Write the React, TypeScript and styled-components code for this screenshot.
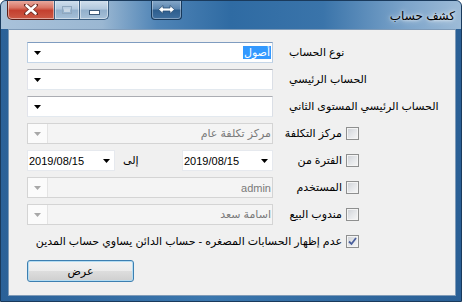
import React from 'react';
import styled, { createGlobalStyle } from 'styled-components';

const GlobalStyle = createGlobalStyle`
  html, body { margin: 0; padding: 0; background: #fff; }
  body {
    width: 462px;
    height: 302px;
    overflow: hidden;
    font-family: Tahoma, "Liberation Sans", "DejaVu Sans", sans-serif;
    font-size: 11px;
  }
`;

const Window = styled.div`
  width: 462px;
  height: 302px;
  box-sizing: border-box;
  display: flex;
  flex-direction: column;
  background: linear-gradient(to right, #2b6198, #3b77ae 45%, #2f679d 80%, #2a5f95);
  border: 1px solid #1a3a5c;
  border-radius: 6px 6px 0 0;
  overflow: hidden;
`;

const TitleBar = styled.div`
  height: 28px;
  flex: none;
  display: flex;
  align-items: flex-start;
  padding-left: 6px;
  background: linear-gradient(to right, #a9c2da 0%, #9ab7d2 22%, #4f84b6 34%, #2f6ba3 50%, #3a74aa 70%, #7ca4ca 88%, #9dbbd7 100%);
`;

const CaptionGroup = styled.div`
  display: flex;
  margin-top: -1px;
`;

const CaptionButton = styled.div<{ $kind: 'close' | 'max' | 'min' }>`
  height: 20px;
  box-sizing: border-box;
  display: flex;
  align-items: center;
  justify-content: center;
  border: 1px solid ${p => (p.$kind === 'close' ? '#5b1f18' : '#3d5f82')};
  border-top: none;
  width: ${p => (p.$kind === 'close' ? 48 : p.$kind === 'max' ? 26 : 30)}px;
  margin-left: ${p => (p.$kind === 'close' ? 0 : -1)}px;
  border-radius: ${p => (p.$kind === 'close' ? '0 0 0 5px' : p.$kind === 'min' ? '0 0 5px 0' : '0')};
  background: ${p =>
    p.$kind === 'close'
      ? 'linear-gradient(#eab0a6 0%, #d97565 40%, #c4402f 55%, #cc5a46 100%)'
      : 'linear-gradient(#d3e1ee 0%, #b3c9de 45%, #93b0cc 55%, #a6c0d8 100%)'};
  box-shadow: inset 0 0 0 1px rgba(255, 255, 255, 0.45);
`;

const SwapButton = styled.div`
  width: 31px;
  height: 20px;
  box-sizing: border-box;
  margin-left: 42px;
  margin-top: -1px;
  display: flex;
  align-items: center;
  justify-content: center;
  border: 1px solid #17385a;
  border-top: none;
  border-radius: 0 0 4px 4px;
  background: linear-gradient(#88aacb 0%, #5d87b1 45%, #2e5e8e 55%, #3f6f9f 100%);
  box-shadow: inset 0 0 0 1px rgba(255, 255, 255, 0.35);
`;

const Title = styled.div`
  flex: 1;
  text-align: right;
  padding: 8px 6px 0 0;
  font-size: 12px;
  color: #000;
  direction: rtl;
  text-shadow: 0 0 6px rgba(255, 255, 255, 0.9), 0 0 3px rgba(255, 255, 255, 0.9);
`;

const Client = styled.div`
  flex: 1;
  margin: 0 5px 5px 7px;
  background: #f0f0f0;
  border: 1px solid #7f9bb8;
  display: flex;
  flex-direction: column;
  gap: 6px;
  padding: 12px 0 0 18px;
`;

const Row = styled.div`
  display: flex;
  align-items: center;
  height: 21px;
`;

const Field = styled.div`
  width: 246px;
  flex: none;
  display: flex;
  align-items: center;
`;

const Box = styled.div<{ $w: number; $disabled?: boolean; $focus?: boolean; $soft?: boolean }>`
  width: ${p => p.$w}px;
  height: 21px;
  box-sizing: border-box;
  flex: none;
  display: flex;
  align-items: center;
  border: 1px solid;
  border-color: ${p =>
    p.$disabled
      ? '#d4d4d4'
      : p.$focus
        ? '#7f9cc0 #b9cde2 #c5d6e8 #b9cde2'
        : p.$soft
          ? '#e6e9ee'
          : '#abadb3 #dbdfe6 #e3e9ef #e2e3ea'};
  background: ${p => (p.$disabled ? '#f4f4f4' : '#fff')};
  color: ${p => (p.$disabled ? '#7a7a7a' : '#000')};
`;

const DropZone = styled.div<{ $disabled?: boolean }>`
  width: 19px;
  height: 100%;
  flex: none;
  display: flex;
  align-items: center;
  justify-content: center;
  background: ${p => (p.$disabled ? '#fbfbfb' : 'transparent')};
  border-right: 1px solid ${p => (p.$disabled ? '#e4e4e4' : 'transparent')};
`;

const Value = styled.div`
  flex: 1;
  direction: rtl;
  text-align: right;
  padding-right: 1px;
  white-space: nowrap;
  overflow: hidden;
`;

const Selected = styled.span`
  background: #3399ff;
  color: #fff;
  padding: 1px 1px 2px;
`;

const DateText = styled.div`
  flex: 1;
  padding-left: 1px;
  white-space: nowrap;
`;

const DateArrow = styled.div`
  width: 16px;
  display: flex;
  justify-content: center;
`;

const Spacer = styled.div`
  flex: 1;
`;

const Label = styled.div<{ $gap?: number }>`
  margin-left: ${p => p.$gap ?? 16}px;
  white-space: nowrap;
  direction: rtl;
  color: #000;
`;

const CheckCell = styled.div<{ $w?: number }>`
  width: ${p => p.$w ?? 86}px;
  flex: none;
  display: flex;
  direction: rtl;
  align-items: center;
  gap: 4px;
  white-space: nowrap;
`;

const CheckBox = styled.span`
  width: 13px;
  height: 13px;
  flex: none;
  box-sizing: border-box;
  border: 1px solid #8e8f8f;
  background: linear-gradient(135deg, #cdd0d5 0%, #e4e6e9 50%, #f7f7f7 100%);
  box-shadow: inset 0 0 0 1px #f4f4f4;
  display: flex;
  align-items: center;
  justify-content: center;
`;

const Button = styled.div`
  width: 107px;
  height: 22px;
  box-sizing: border-box;
  margin-top: 2px;
  display: flex;
  align-items: center;
  justify-content: center;
  border: 1px solid #3c7fb1;
  border-radius: 3px;
  background: linear-gradient(#f2f2f2 0%, #ebebeb 50%, #dddddd 51%, #cfcfcf 100%);
  box-shadow: inset 0 0 0 1px #b4dcf2;
  color: #000;
  direction: rtl;
`;

const Arrow = ({ color = '#000' }: { color?: string }) => (
  <svg width="7" height="4" viewBox="0 0 7 4">
    <polygon points="0,0 7,0 3.5,4" fill={color} />
  </svg>
);

const Check = ({ on }: { on?: boolean }) => (
  <CheckBox>
    {on && (
      <svg width="9" height="9" viewBox="0 0 9 9">
        <path d="M1 4.5 L3.5 7 L8 1" stroke="#4a5f9c" strokeWidth="1.8" fill="none" />
      </svg>
    )}
  </CheckBox>
);

const Combo = ({ value, disabled, focus }: { value?: React.ReactNode; disabled?: boolean; focus?: boolean }) => (
  <Box $w={246} $disabled={disabled} $focus={focus}>
    <DropZone $disabled={disabled}>
      <Arrow color={disabled ? '#a8a8a8' : '#000'} />
    </DropZone>
    <Value>{value}</Value>
  </Box>
);

const DatePicker = ({ w, value }: { w: number; value: string }) => (
  <Box $w={w} $soft>
    <DateText>{value}</DateText>
    <DateArrow>
      <Arrow />
    </DateArrow>
  </Box>
);

const App: React.FC = () => (
  <>
    <GlobalStyle />
    <Window>
      <TitleBar>
        <CaptionGroup>
          <CaptionButton $kind="close">
            <svg width="14" height="11" viewBox="0 0 14 11">
              <path d="M2 1 L12 10 M12 1 L2 10" stroke="#6b2a22" strokeWidth="4.2" strokeLinecap="round" />
              <path d="M2.5 1.5 L11.5 9.5 M11.5 1.5 L2.5 9.5" stroke="#fff" strokeWidth="2.6" strokeLinecap="round" />
            </svg>
          </CaptionButton>
          <CaptionButton $kind="max">
            <svg width="10" height="8" viewBox="0 0 10 8">
              <rect x="0.5" y="0.5" width="9" height="7" fill="none" stroke="#8fa7be" />
              <rect x="2" y="2.5" width="6" height="3.5" fill="#c7d6e4" />
            </svg>
          </CaptionButton>
          <CaptionButton $kind="min">
            <svg width="11" height="14" viewBox="0 0 11 14">
              <rect x="0.5" y="7.5" width="10" height="4" fill="#fff" stroke="#3d5a7a" />
            </svg>
          </CaptionButton>
        </CaptionGroup>
        <SwapButton>
          <svg width="17" height="9" viewBox="0 0 17 9">
            <path d="M0.5 4.5 L5 0.5 L5 3 L12 3 L12 0.5 L16.5 4.5 L12 8.5 L12 6 L5 6 L5 8.5 Z" fill="#fff" stroke="#2a4f76" strokeWidth="0.8" />
          </svg>
        </SwapButton>
        <Title>كشف حساب</Title>
      </TitleBar>
      <Client>
        <Row>
          <Field>
            <Combo focus value={<Selected>أصول</Selected>} />
          </Field>
          <Label>نوع الحساب</Label>
        </Row>
        <Row>
          <Field>
            <Combo />
          </Field>
          <Label>الحساب الرئيسي</Label>
        </Row>
        <Row>
          <Field>
            <Combo />
          </Field>
          <Label>الحساب الرئيسي المستوى الثاني</Label>
        </Row>
        <Row>
          <Field>
            <Combo disabled value="مركز تكلفة عام" />
          </Field>
          <CheckCell>
            <Check />
            <span>مركز التكلفة</span>
          </CheckCell>
        </Row>
        <Row>
          <Field>
            <DatePicker w={88} value="2019/08/15" />
            <Label $gap={8}>إلى</Label>
            <Spacer />
            <DatePicker w={91} value="2019/08/15" />
          </Field>
          <CheckCell>
            <Check />
            <span>الفترة من</span>
          </CheckCell>
        </Row>
        <Row>
          <Field>
            <Combo disabled value="admin" />
          </Field>
          <CheckCell>
            <Check />
            <span>المستخدم</span>
          </CheckCell>
        </Row>
        <Row>
          <Field>
            <Combo disabled value="اسامة سعد" />
          </Field>
          <CheckCell>
            <Check />
            <span>مندوب البيع</span>
          </CheckCell>
        </Row>
        <Row>
          <CheckCell $w={332}>
            <Check on />
            <span>عدم إظهار الحسابات المصغره - حساب الدائن يساوي حساب المدين</span>
          </CheckCell>
        </Row>
        <Button>عرض</Button>
      </Client>
    </Window>
  </>
);

export default App;
